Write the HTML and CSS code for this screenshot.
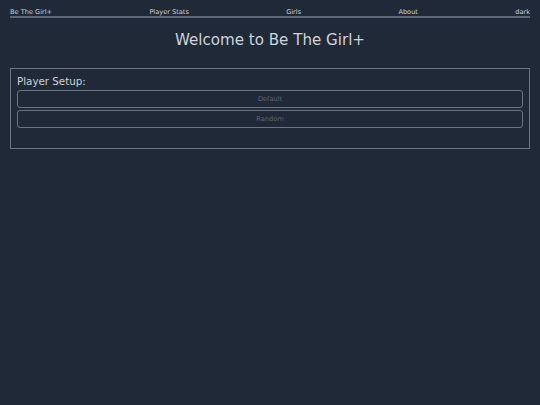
FILE: index.html
```html
<!DOCTYPE html>
<html lang="en">
<head>
<meta charset="utf-8">
<title>Be The Girl+</title>
<link rel="stylesheet" href="styles.css">
</head>
<body>
<div class="page">
  <nav class="nav">
    <a class="nav-link" href="#">Be The Girl+</a>
    <a class="nav-link" href="#">Player Stats</a>
    <a class="nav-link" href="#">Girls</a>
    <a class="nav-link" href="#">About</a>
    <a class="nav-link" href="#">dark</a>
  </nav>
  <h1 class="title">Welcome to Be The Girl+</h1>
  <section class="setup">
    <h2 class="setup-title">Player Setup:</h2>
    <div class="setup-buttons">
      <button class="btn" type="button">Default</button>
      <button class="btn" type="button">Random</button>
    </div>
  </section>
</div>
</body>
</html>
```
FILE: styles.css
```css
html, body {
  margin: 0;
  padding: 0;
  background: #1f2937;
  height: 100%;
}
body {
  font-family: "DejaVu Sans", Verdana, sans-serif;
  color: #cfd3da;
}
.page {
  padding: 0 10px;
}
.nav {
  display: flex;
  justify-content: space-between;
  padding-top: 8px;
  border-bottom: 2px solid #5b6677;
  font-size: 6.6px;
  line-height: 8px;
}
.nav-link {
  color: #cfd3da;
  text-decoration: none;
}
.title {
  margin: 13px 0 19px;
  font-size: 15.1px;
  line-height: 18px;
  font-weight: normal;
  text-align: center;
  color: #cfd3da;
}
.setup {
  border: 1px solid #6b7483;
  padding: 6px 6px 20px;
}
.setup-title {
  margin: 0 0 3px;
  font-size: 10.3px;
  line-height: 12px;
  font-weight: normal;
  color: #cfd3da;
}
.setup-buttons {
  display: flex;
  flex-direction: column;
  gap: 2px;
}
.btn {
  height: 18px;
  margin: 0;
  padding: 0;
  border: 1px solid #6b7483;
  border-radius: 3px;
  background: transparent;
  color: #5f6876;
  font-family: "DejaVu Sans", Verdana, sans-serif;
  font-size: 6.6px;
}
```
